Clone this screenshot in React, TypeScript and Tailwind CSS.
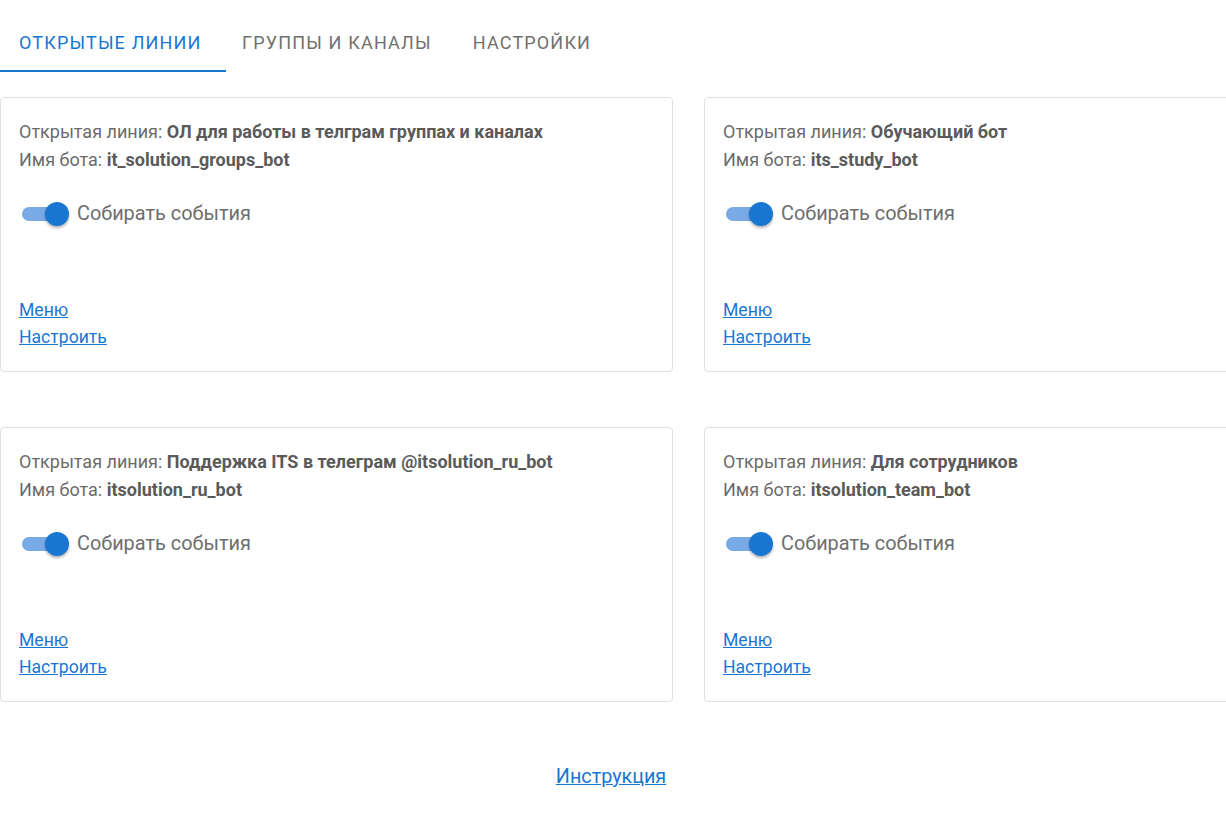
import { useState } from "react";

interface Line {
  name: string;
  bot: string;
}

const LINES: Line[] = [
  { name: "ОЛ для работы в телграм группах и каналах", bot: "it_solution_groups_bot" },
  { name: "Обучающий бот", bot: "its_study_bot" },
  { name: "Поддержка ITS в телеграм @itsolution_ru_bot", bot: "itsolution_ru_bot" },
  { name: "Для сотрудников", bot: "itsolution_team_bot" },
];

const TABS = ["Открытые линии", "Группы и каналы", "Настройки"];
const TAB_PAD = ["w-[226px] pl-[19px]", "pl-[16px] pr-[20px]", "pl-[21px] pr-[16px]"];

function Toggle({ on, onClick }: { on: boolean; onClick: () => void }) {
  return (
    <button onClick={onClick} className="relative h-[38px] w-[58px] shrink-0">
      <span
        className={`absolute left-[12px] top-[12px] h-[14px] w-[34px] rounded-full ${
          on ? "bg-[#7aaae6]" : "bg-[#b9b9b9]"
        }`}
      />
      <span
        className={`absolute top-[7px] h-[24px] w-[24px] rounded-full shadow-[0_2px_3px_rgba(0,0,0,0.3)] ${
          on ? "left-[35px] bg-[#1976d2]" : "left-[9px] bg-[#fafafa]"
        }`}
      />
    </button>
  );
}

function LineCard({ line }: { line: Line }) {
  const [on, setOn] = useState(true);
  return (
    <div className="flex h-[275px] flex-col rounded-[4px] border border-[#e0e0e0] bg-white px-[18px] pb-[20px] pt-[20px]">
      <div className="text-[18px] leading-[28px] text-[#6b6b6b]">
        Открытая линия: <b className="font-bold text-[#5a5a5a]">{line.name}</b>
      </div>
      <div className="text-[18px] leading-[28px] text-[#6b6b6b]">
        Имя бота: <b className="font-bold text-[#5a5a5a]">{line.bot}</b>
      </div>
      <div className="-ml-[9px] mt-[21px] flex items-center">
        <Toggle on={on} onClick={() => setOn(!on)} />
        <span className="ml-[9px] text-[19.9px] text-[#6e6e6e]">Собирать события</span>
      </div>
      <div className="mt-auto flex flex-col items-start text-[17.6px] leading-[27px] text-[#1976d2]">
        <a href="#" className="underline">Меню</a>
        <a href="#" className="underline">Настроить</a>
      </div>
    </div>
  );
}

export default function App() {
  const [tab, setTab] = useState(0);
  return (
    <div className="min-h-[824px] w-[1226px] overflow-hidden bg-white font-['Roboto',sans-serif]">
      <div className="flex">
        {TABS.map((t, i) => (
          <button
            key={t}
            onClick={() => setTab(i)}
            className={`flex h-[72px] items-center pt-[14px] text-[18px] font-normal uppercase tracking-[0.065em] ${TAB_PAD[i]} ${
              tab === i
                ? "border-b-2 border-[#1976d2] text-[#1976d2]"
                : "border-b-2 border-transparent text-[#707070]"
            }`}
          >
            {t}
          </button>
        ))}
      </div>
      <div className="mt-[25px] grid w-[1378px] grid-cols-[673px_673px] gap-x-[31px] gap-y-[55px]">
        {LINES.map((l) => (
          <LineCard key={l.bot} line={l} />
        ))}
      </div>
      <div className="mt-[60px] flex w-[1226px] justify-center pr-[4px]">
        <a href="#" className="text-[19.8px] text-[#1976d2] underline">
          Инструкция
        </a>
      </div>
    </div>
  );
}
